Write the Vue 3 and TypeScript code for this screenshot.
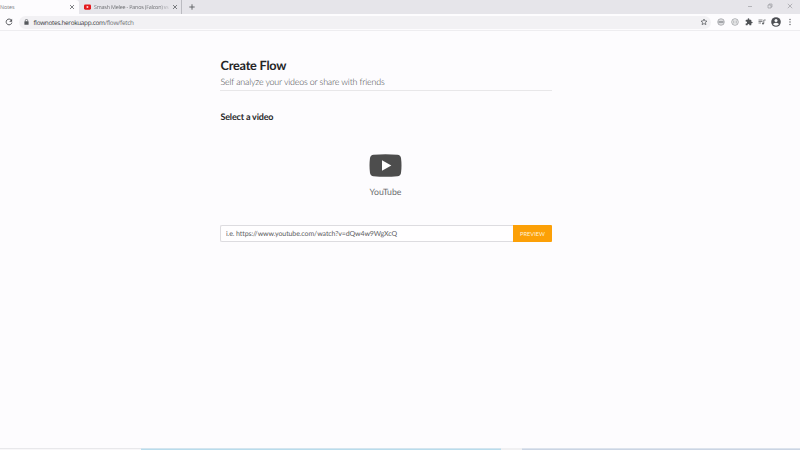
<script setup lang="ts">
import { ref } from 'vue'

const videoUrl = ref<string>('')
</script>

<template>
  <div class="browser">
    <div class="tabs">
      <div class="tab active">
        <span class="tab-title own">Notes</span>
        <svg class="close" viewBox="0 0 6 6"><path d="M1 1l4 4M5 1l-4 4" /></svg>
      </div>
      <div class="tab">
        <svg class="favicon" viewBox="0 0 8 6"><rect width="8" height="6" rx="1.5" fill="#e3171b" /><path d="M3.1 1.6v2.8L5.5 3z" fill="#fff" /></svg>
        <span class="tab-title other">Smash Melee - Panos (Falcon) vs</span>
        <svg class="close second" viewBox="0 0 6 6"><path d="M1 1l4 4M5 1l-4 4" /></svg>
      </div>
      <svg class="plus" viewBox="0 0 6 6"><path d="M3 .3v5.4M.3 3h5.4" /></svg>
      <div class="window-controls">
        <svg viewBox="0 0 6 6"><path d="M1 3.5h4" /></svg>
        <svg viewBox="0 0 6 6"><path d="M1 2h3v3H1zM2 2V1h3v3H4" /></svg>
        <svg viewBox="0 0 6 6"><path d="M.8 .8l4.4 4.4M5.2 .8L.8 5.2" /></svg>
      </div>
    </div>

    <div class="toolbar">
      <svg class="reload" viewBox="0 0 8 8"><path d="M6.4 2.2A2.9 2.9 0 1 0 6.9 4.6" fill="none" stroke="#505256" stroke-width=".95" /><path d="M7.1 .8v2.9H4.2z" fill="#505256" /></svg>
      <div class="address">
        <svg class="lock" viewBox="0 0 5 6"><rect x=".4" y="2.3" width="4.2" height="3.5" rx=".4" fill="#55585c" /><path d="M1.3 2.5V1.6a1.2 1.2 0 0 1 2.4 0v.9" fill="none" stroke="#55585c" stroke-width=".7" /></svg>
        <span class="url"><b>flownotes.herokuapp.com</b>/flow/fetch</span>
        <svg class="star" viewBox="0 0 8 8"><path d="M4 1l.85 1.95 2.15.2-1.6 1.4.5 2.1L4 5.55l-1.9 1.1.5-2.1L1 3.15l2.15-.2z" fill="none" stroke="#5b5e62" stroke-width=".75" /></svg>
      </div>
      <div class="extensions">
        <svg class="ext" viewBox="0 0 8 8"><circle cx="4" cy="4" r="3.3" fill="#dedee1" stroke="#8d8f93" stroke-width=".6" /><path d="M1.5 3.2h5v1.6h-5z" fill="#96989c" /></svg>
        <svg class="ext" viewBox="0 0 8 8"><circle cx="4" cy="4" r="3.3" fill="#f7f7f8" stroke="#8d8f93" stroke-width=".7" /><path d="M2.9 2.4v1L2.3 4l.6.6v1M5.1 2.4v1l.6.6-.6.6v1" fill="none" stroke="#707277" stroke-width=".65" /></svg>
        <svg class="ext" viewBox="0 0 24 24"><path fill="#505256" d="M20.5 11H19V7a2 2 0 0 0-2-2h-4V3.5a2.5 2.5 0 0 0-5 0V5H4a2 2 0 0 0-2 2v3.8h1.5a2.7 2.7 0 0 1 0 5.4H2V20a2 2 0 0 0 2 2h3.8v-1.5a2.7 2.7 0 0 1 5.4 0V22H17a2 2 0 0 0 2-2v-4h1.5a2.5 2.5 0 0 0 0-5z" /></svg>
        <svg class="ext" viewBox="0 0 8 8"><path d="M.5 2h4M.5 3.5h4M.5 5H3M5.8 5.5V2h1.9" fill="none" stroke="#5d6064" stroke-width=".75" /><circle cx="5" cy="5.5" r="1" fill="#5d6064" /></svg>
        <svg class="avatar" viewBox="0 0 10 10"><circle cx="5" cy="5" r="4.8" fill="#4c4e53" /><circle cx="5" cy="3.5" r="1.5" fill="#fafafb" /><path d="M2 7.3Q2.3 5.8 5 5.8t3 1.5Q7 8.7 5 8.7T2 7.3z" fill="#fafafb" /></svg>
        <svg class="dots" viewBox="0 0 2 8"><circle cx="1" cy="1.5" r=".65" /><circle cx="1" cy="4" r=".65" /><circle cx="1" cy="6.5" r=".65" /></svg>
      </div>
    </div>

    <main>
      <header>
        <h1>Create Flow</h1>
        <p>Self analyze your videos or share with friends</p>
      </header>
      <h2>Select a video</h2>
      <div class="source">
        <svg viewBox="0 0 33 23"><path d="M4.5.8Q16.5-.5 28.5.8q3 .3 3.5 3.2 1 7.500 0 15-.5 2.900-3.500 3.200-12 1.300-24 0Q1.500 21.900 1 19 0 11.500 1 4 1.500 1.100 4.500.8z" fill="#4d4d4d" /><path d="M13 6.300v10.400l9.300-5.200z" fill="#fff" /></svg>
        <span>YouTube</span>
      </div>
      <form @submit.prevent>
        <input v-model="videoUrl" type="text" placeholder="i.e. https://www.youtube.com/watch?v=dQw4w9WgXcQ" />
        <button type="submit">PREVIEW</button>
      </form>
    </main>

    <footer>
      <i class="idle"></i><i class="blue"></i><i class="gap"></i><i class="slate"></i>
    </footer>
  </div>
</template>

<style>
body { overflow: hidden; }
</style>

<style scoped>
* { box-sizing: border-box; }
svg { display: block; flex: none; }
.browser { width: 800px; height: 450px; display: flex; flex-direction: column; background: #fdfcfe; overflow: hidden; font-family: Lato, sans-serif; text-rendering: geometricPrecision; }
.tabs { height: 14px; flex: none; display: flex; align-items: center; background: #e6e5ea; font-family: "Open Sans", sans-serif; }
.tab { width: 103px; height: 14px; display: flex; align-items: center; padding-left: 5px; border-right: 1px solid #bbbbc1; }
.tab.active { width: 79px; padding: 0; background: #fdfcfe; border: 0; border-radius: 0 3px 0 0; }
.tab-title { font-size: 5.3px; line-height: 15px; white-space: nowrap; color: #77787c; }
.own { width: 69px; }
.other { width: 77px; margin-left: 3px; font-size: 5.4px; letter-spacing: -0.2px; color: #6d6e72; -webkit-mask-image: linear-gradient(90deg, #000 85%, transparent); mask-image: linear-gradient(90deg, #000 85%, transparent); }
.close { width: 6px; height: 6px; fill: none; stroke: #606266; stroke-width: 0.8; }
.second { margin-left: 1px; }
.favicon { width: 7px; height: 6px; }
.plus { width: 6px; height: 6px; margin-left: 7px; fill: none; stroke: #5a5b60; stroke-width: 0.9; }
.window-controls { margin-left: auto; display: flex; gap: 14px; padding: 0 7px 2px 0; }
.window-controls svg { width: 6px; height: 6px; fill: none; stroke: #929297; stroke-width: 0.6; }
.toolbar { height: 17px; flex: none; display: flex; align-items: center; padding-left: 5px; background: #fdfcfe; border-bottom: 1px solid #eeedf0; }
.reload { width: 8px; height: 8px; }
.address { width: 692px; height: 13px; margin-left: 6px; padding: 0 3px 0 5px; display: flex; align-items: center; border-radius: 7px; background: #f2f1f4; }
.lock { width: 5px; height: 6px; }
.url { margin-left: 4.5px; font: 6.4px/13px "Open Sans", sans-serif; letter-spacing: -0.34px; letter-spacing: -0.3px; color: #6f7175; white-space: nowrap; }
.url b { font-weight: 400; color: #38393d; }
.star { width: 8px; height: 8px; margin-left: auto; }
.extensions { display: flex; align-items: center; margin-left: 6px; }
.ext { width: 8px; height: 8px; margin-right: 5.8px; }
.avatar { width: 10px; height: 10px; margin-right: 8px; margin-left: -1px; }
.dots { width: 2px; height: 8px; fill: #55575b; }
main { width: 332px; flex: 1; margin-left: 220px; padding-top: 26px; }
header { height: 34px; padding-left: 0.5px; border-bottom: 1px solid #e8e7e9; }
h1 { margin: 0; font-size: 12.7px; letter-spacing: -0.22px; line-height: 17px; font-weight: 700; color: #252527; }
p { margin: 0; font-size: 8.9px; letter-spacing: -0.17px; line-height: 15px; font-weight: 300; color: #3c3c3f; white-space: nowrap; }
h2 { margin: 19px 0 0; padding-left: 0.5px; font-size: 9px; letter-spacing: -0.18px; line-height: 13px; font-weight: 700; color: #29292b; }
.source { display: flex; flex-direction: column; align-items: center; margin-top: 31px; padding-right: 1px; }
.source svg { width: 33px; height: 23px; }
.source span { margin-top: 8px; font-size: 8.7px; line-height: 13px; color: #6c6c6f; }
form { display: flex; height: 17px; margin-top: 27px; }
input { flex: 1; min-width: 0; height: 17px; padding: 1px 5px 0; border: 1px solid #dddce0; border-right: 0; border-radius: 2px 0 0 2px; background: #fffeff; font: 7px/15px Lato, sans-serif; letter-spacing: -0.09px; color: #555; outline: 0; text-rendering: geometricPrecision; }
input::placeholder { color: #606063; opacity: 1; }
button { width: 39px; height: 17px; padding: 0; border: 0; border-radius: 0 1px 1px 0; background: #fca007; color: #fff1d6; font: 5.7px/17px Lato, sans-serif; }
footer { height: 2px; flex: none; display: flex; }
footer i { display: block; height: 2px; }
.idle { width: 141px; background: linear-gradient(#e8e8eb 50%, #f8f7f9 50%); }
.blue { width: 360px; background: linear-gradient(#d3e5ef 50%, #b9dcec 50%); }
.gap { width: 21px; background: #f0f0f2; }
.slate { flex: 1; background: linear-gradient(#dce3ed 50%, #cbd5e4 50%); }
</style>
